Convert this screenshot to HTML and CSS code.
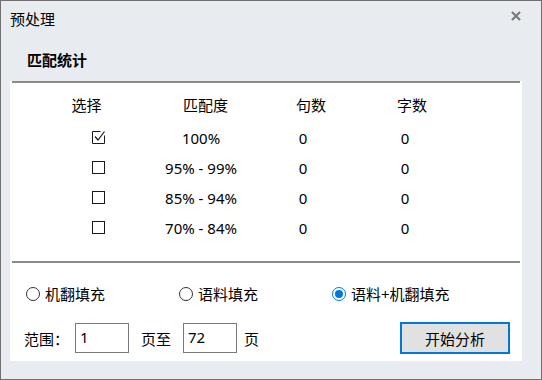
FILE: index.html
```html
<!DOCTYPE html>
<html lang="zh-CN">
<head>
    <meta charset="UTF-8">
    <title>预处理</title>
    <link rel="stylesheet" href="styles.css">
</head>
<body>
    <div class="dialog">
        <div class="titlebar">
            <span class="title">预处理</span>
            <span class="close">
                <svg width="10" height="10" viewBox="0 0 10 10"><path d="M1 1 L9 9 M9 1 L1 9" stroke="#7a7a7a" stroke-width="2.2"/></svg>
            </span>
        </div>
        <div class="group-label">匹配统计</div>
        <div class="panel">
            <div class="rule"></div>
            <div class="stats">
                <div class="stats-head">
                    <span>选择</span><span>匹配度</span><span>句数</span><span>字数</span>
                </div>
                <div class="stats-row">
                    <span class="check">
                        <svg width="13" height="13" viewBox="0 0 13 13"><path d="M12.5 4.5 V12.5 H0.5 V0.5 H8.5" fill="none" stroke="#1a1a1a"/><path d="M3 5.5 L6 9 L12.5 0.5" fill="none" stroke="#1a1a1a" stroke-width="1.2"/></svg>
                    </span>
                    <span>100%</span><span>0</span><span>0</span>
                </div>
                <div class="stats-row">
                    <span class="check"><svg width="13" height="13" viewBox="0 0 13 13"><rect x="0.5" y="0.5" width="12" height="12" fill="none" stroke="#1a1a1a"/></svg></span>
                    <span>95% - 99%</span><span>0</span><span>0</span>
                </div>
                <div class="stats-row">
                    <span class="check"><svg width="13" height="13" viewBox="0 0 13 13"><rect x="0.5" y="0.5" width="12" height="12" fill="none" stroke="#1a1a1a"/></svg></span>
                    <span>85% - 94%</span><span>0</span><span>0</span>
                </div>
                <div class="stats-row">
                    <span class="check"><svg width="13" height="13" viewBox="0 0 13 13"><rect x="0.5" y="0.5" width="12" height="12" fill="none" stroke="#1a1a1a"/></svg></span>
                    <span>70% - 84%</span><span>0</span><span>0</span>
                </div>
            </div>
            <div class="rule rule-bottom"></div>
            <div class="fill-options">
                <label class="radio"><span class="radio-dot"></span>机翻填充</label>
                <label class="radio"><span class="radio-dot"></span>语料填充</label>
                <label class="radio"><span class="radio-dot on"></span>语料+机翻填充</label>
            </div>
            <div class="range-row">
                <span class="range-label">范围：</span>
                <input type="text" class="page-input" value="1">
                <span class="to-label">页至</span>
                <input type="text" class="page-input" value="72">
                <span class="page-label">页</span>
                <button class="start-btn">开始分析</button>
            </div>
        </div>
    </div>
</body>
</html>
```

FILE: styles.css
```css
body {
    margin: 0;
    padding: 0;
    font-family: "Noto Sans", "Noto Sans CJK SC", sans-serif;
    font-size: 15px;
    color: #000;
}
.dialog {
    width: 542px;
    height: 380px;
    box-sizing: border-box;
    border: 1px solid #707070;
    background-color: #e8ecf0;
}
.titlebar {
    height: 36px;
    display: flex;
    justify-content: space-between;
    align-items: center;
    padding: 0 20px 0 9px;
}
.title {
    line-height: 20px;
}
.close {
    align-self: flex-start;
    margin-top: 10px;
    height: 10px;
}
.close svg {
    display: block;
}
.group-label {
    padding: 13px 0 0 26px;
    line-height: 20px;
    font-weight: bold;
}
.panel {
    margin: 11px 0 0 9px;
    width: 512px;
    height: 280px;
    background-color: #fff;
}
.rule {
    height: 2px;
    margin: 0 2px;
    background-color: #8a8a8a;
}
.stats {
    padding-top: 7px;
}
.stats-head, .stats-row {
    display: grid;
    height: 30px;
    align-items: center;
    line-height: 20px;
}
.stats-head {
    grid-template-columns: 81px 157px 54px 148px;
    padding-left: 36px;
    margin-bottom: 3px;
}
.stats-row {
    grid-template-columns: 96px 110px 94px 110px;
    padding-left: 40px;
}
.stats-head span, .stats-row span {
    text-align: center;
}
.check svg {
    display: block;
    margin: 0 auto;
    position: relative;
    top: -1px;
}
.rule-bottom {
    margin-top: 18px;
}
.fill-options {
    display: grid;
    grid-template-columns: 153px 153px auto;
    padding-left: 16px;
    margin-top: 21px;
    height: 20px;
    align-items: center;
}
.radio {
    display: flex;
    align-items: center;
    gap: 5px;
    line-height: 20px;
}
.radio-dot {
    width: 14px;
    height: 14px;
    box-sizing: border-box;
    border: 1px solid #333;
    border-radius: 50%;
    background-color: #fff;
    display: flex;
    align-items: center;
    justify-content: center;
}
.radio-dot.on {
    border-color: #0078d7;
}
.radio-dot.on::after {
    content: "";
    width: 8px;
    height: 8px;
    border-radius: 50%;
    background-color: #0078d7;
}
.range-row {
    display: flex;
    align-items: center;
    height: 32px;
    margin-top: 18px;
    padding: 0 12px 0 14px;
}
.range-label {
    width: 51px;
}
.page-input {
    width: 54px;
    height: 30px;
    box-sizing: border-box;
    border: 1px solid #7a7a7a;
    padding: 0 4px 3px;
    font-family: inherit;
    font-size: 15px;
    color: #000;
    outline: none;
}
.to-label {
    margin: 0 12px;
}
.page-label {
    margin-left: 7px;
}
.start-btn {
    margin-left: auto;
    width: 110px;
    height: 32px;
    border: 2px solid #0078d7;
    background-color: #e1e1e1;
    font-family: inherit;
    font-size: 15px;
    color: #000;
    padding: 0;
}
```
